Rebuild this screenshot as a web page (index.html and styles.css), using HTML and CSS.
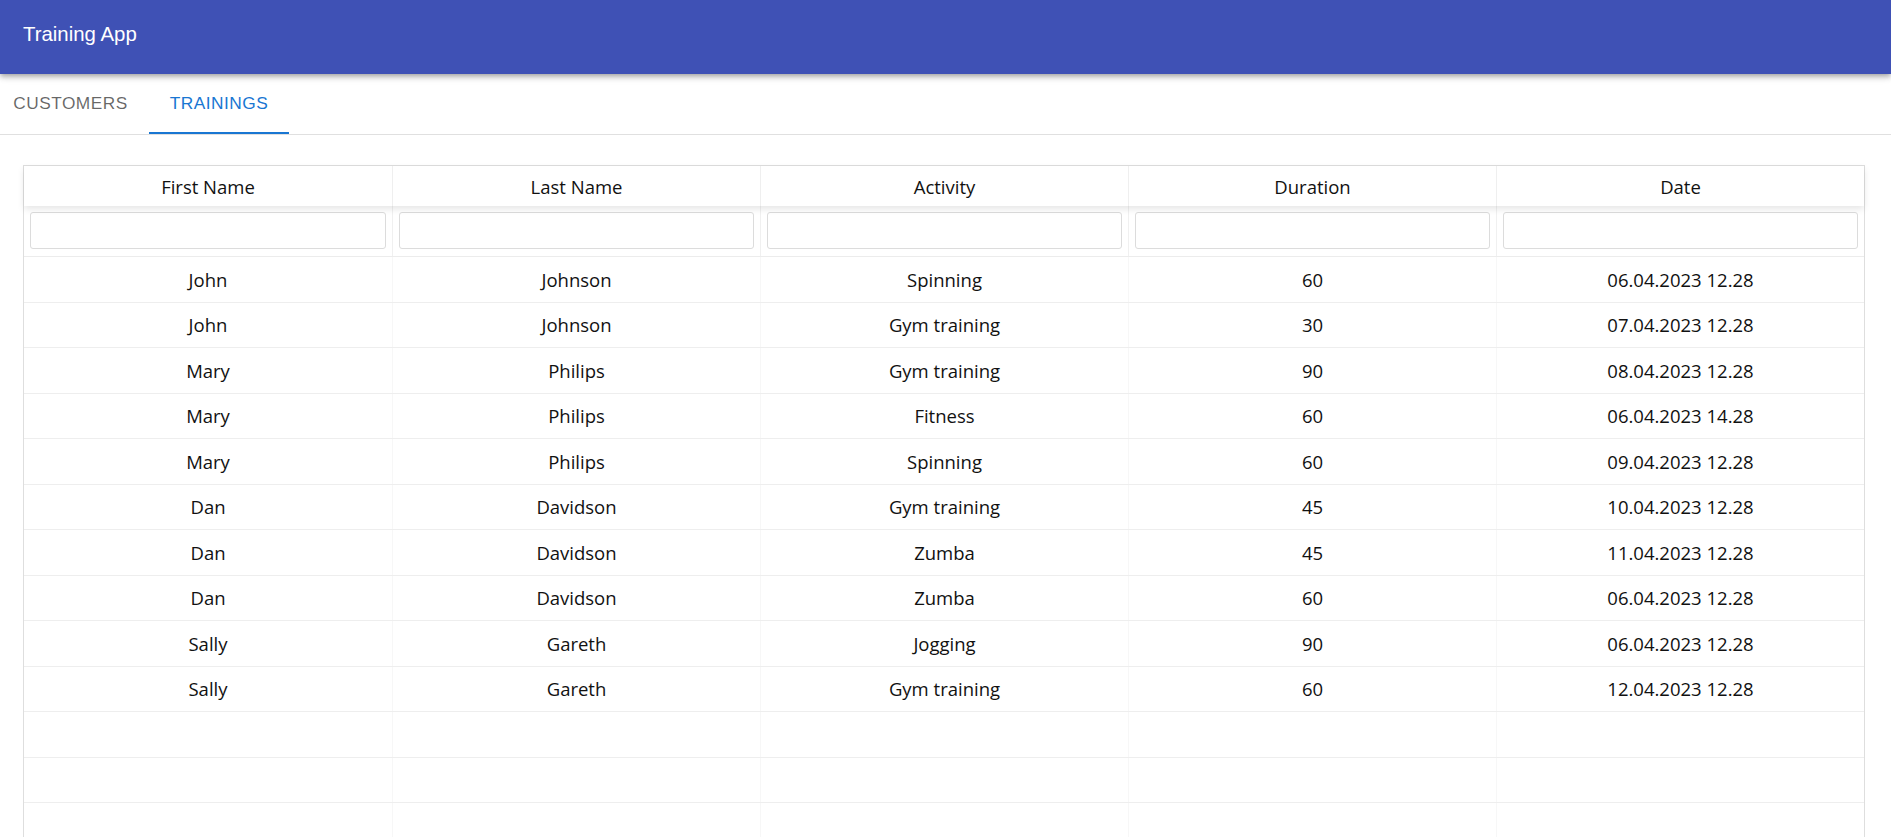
FILE: index.html
```html
<!DOCTYPE html>
<html lang="en">
<head>
<meta charset="utf-8">
<title>Training App</title>
<link rel="stylesheet" href="styles.css">
</head>
<body>
<header class="appbar">
  <div class="app-title">Training App</div>
</header>
<nav class="tabs">
  <button class="tab tab-customers">CUSTOMERS</button>
  <button class="tab tab-trainings active">TRAININGS</button>
</nav>
<main class="content">
  <div class="grid">
    <div class="grid-row grid-head">
      <div class="cell">First Name</div>
      <div class="cell">Last Name</div>
      <div class="cell">Activity</div>
      <div class="cell">Duration</div>
      <div class="cell">Date</div>
    </div>
    <div class="grid-row filter-row">
      <div class="fcell"><input class="filter" type="text"></div>
      <div class="fcell"><input class="filter" type="text"></div>
      <div class="fcell"><input class="filter" type="text"></div>
      <div class="fcell"><input class="filter" type="text"></div>
      <div class="fcell"><input class="filter" type="text"></div>
    </div>
    <div class="grid-body">
      <div class="grid-row data-row"><div class="cell">John</div><div class="cell">Johnson</div><div class="cell">Spinning</div><div class="cell">60</div><div class="cell">06.04.2023 12.28</div></div>
      <div class="grid-row data-row"><div class="cell">John</div><div class="cell">Johnson</div><div class="cell">Gym training</div><div class="cell">30</div><div class="cell">07.04.2023 12.28</div></div>
      <div class="grid-row data-row"><div class="cell">Mary</div><div class="cell">Philips</div><div class="cell">Gym training</div><div class="cell">90</div><div class="cell">08.04.2023 12.28</div></div>
      <div class="grid-row data-row"><div class="cell">Mary</div><div class="cell">Philips</div><div class="cell">Fitness</div><div class="cell">60</div><div class="cell">06.04.2023 14.28</div></div>
      <div class="grid-row data-row"><div class="cell">Mary</div><div class="cell">Philips</div><div class="cell">Spinning</div><div class="cell">60</div><div class="cell">09.04.2023 12.28</div></div>
      <div class="grid-row data-row"><div class="cell">Dan</div><div class="cell">Davidson</div><div class="cell">Gym training</div><div class="cell">45</div><div class="cell">10.04.2023 12.28</div></div>
      <div class="grid-row data-row"><div class="cell">Dan</div><div class="cell">Davidson</div><div class="cell">Zumba</div><div class="cell">45</div><div class="cell">11.04.2023 12.28</div></div>
      <div class="grid-row data-row"><div class="cell">Dan</div><div class="cell">Davidson</div><div class="cell">Zumba</div><div class="cell">60</div><div class="cell">06.04.2023 12.28</div></div>
      <div class="grid-row data-row"><div class="cell">Sally</div><div class="cell">Gareth</div><div class="cell">Jogging</div><div class="cell">90</div><div class="cell">06.04.2023 12.28</div></div>
      <div class="grid-row data-row"><div class="cell">Sally</div><div class="cell">Gareth</div><div class="cell">Gym training</div><div class="cell">60</div><div class="cell">12.04.2023 12.28</div></div>
      <div class="grid-row data-row"><div class="cell"></div><div class="cell"></div><div class="cell"></div><div class="cell"></div><div class="cell"></div></div>
      <div class="grid-row data-row"><div class="cell"></div><div class="cell"></div><div class="cell"></div><div class="cell"></div><div class="cell"></div></div>
      <div class="grid-row data-row"><div class="cell"></div><div class="cell"></div><div class="cell"></div><div class="cell"></div><div class="cell"></div></div>
    </div>
  </div>
</main>
</body>
</html>
```
FILE: styles.css
```css
html, body {
  margin: 0;
  padding: 0;
  overflow: hidden;
  background: #fff;
}

body {
  font-family: "Liberation Sans", Arial, sans-serif;
}

.appbar {
  position: relative;
  z-index: 2;
  height: 74px;
  background: #3f51b5;
  color: #fff;
  display: flex;
  align-items: center;
  padding: 0 0 6px 23px;
  box-sizing: border-box;
  box-shadow: 0 2px 4px -1px rgba(0,0,0,.2), 0 4px 5px 0 rgba(0,0,0,.14), 0 1px 10px 0 rgba(0,0,0,.12);
}

.app-title {
  font-size: 20.4px;
  line-height: 1;
}

.tabs {
  display: flex;
  height: 61px;
  border-bottom: 1px solid #e0e0e0;
  box-sizing: border-box;
}

.tab {
  border: none;
  background: none;
  margin: 0;
  padding: 0;
  font-family: "Liberation Sans", Arial, sans-serif;
  font-size: 17.3px;
  letter-spacing: 0.5px;
  color: rgba(0,0,0,0.6);
  display: flex;
  align-items: center;
  justify-content: center;
  border-bottom: 2px solid transparent;
  cursor: pointer;
}

.tab-customers { width: 141px; }
.tab-trainings { width: 140px; margin-left: 8px; }

.tab.active {
  color: #1976d2;
  border-bottom-color: #1976d2;
}

.content {
  padding: 30px 26px 0 23px;
}

.grid {
  border: 1px solid #dedede;
  font-family: "Open Sans", "Noto Sans", sans-serif;
  font-size: 18.5px;
  color: #111;
}

.grid-row {
  display: grid;
  grid-template-columns: repeat(5, 1fr);
}

.grid-head {
  height: 40px;
  position: relative;
  z-index: 1;
  box-shadow: 0 3px 7px rgba(0,0,0,0.1);
  background: #fff;
}

.grid-head .cell {
  border-left: 1px solid #efefef;
}

.grid-head .cell:first-child,
.filter-row .fcell:first-child,
.data-row .cell:first-child {
  border-left: none;
}

.cell {
  display: flex;
  align-items: center;
  justify-content: center;
  white-space: nowrap;
  box-sizing: border-box;
}

.filter-row {
  height: 51px;
  border-bottom: 1px solid #ececec;
  box-sizing: border-box;
}

.fcell {
  border-left: 1px solid #f0f0f0;
  padding: 6px 6px 0 6px;
  box-sizing: border-box;
}

.filter {
  display: block;
  width: 100%;
  height: 37px;
  box-sizing: border-box;
  border: 1px solid #dcdcdc;
  border-radius: 3px;
  background: #fff;
  margin: 0;
  padding: 0 6px;
  font: inherit;
  outline: none;
}

.data-row {
  height: 45.5px;
  box-sizing: border-box;
  border-bottom: 1px solid #eeeeee;
}

.data-row .cell {
  border-left: 1px solid #f7f7f7;
}
```
